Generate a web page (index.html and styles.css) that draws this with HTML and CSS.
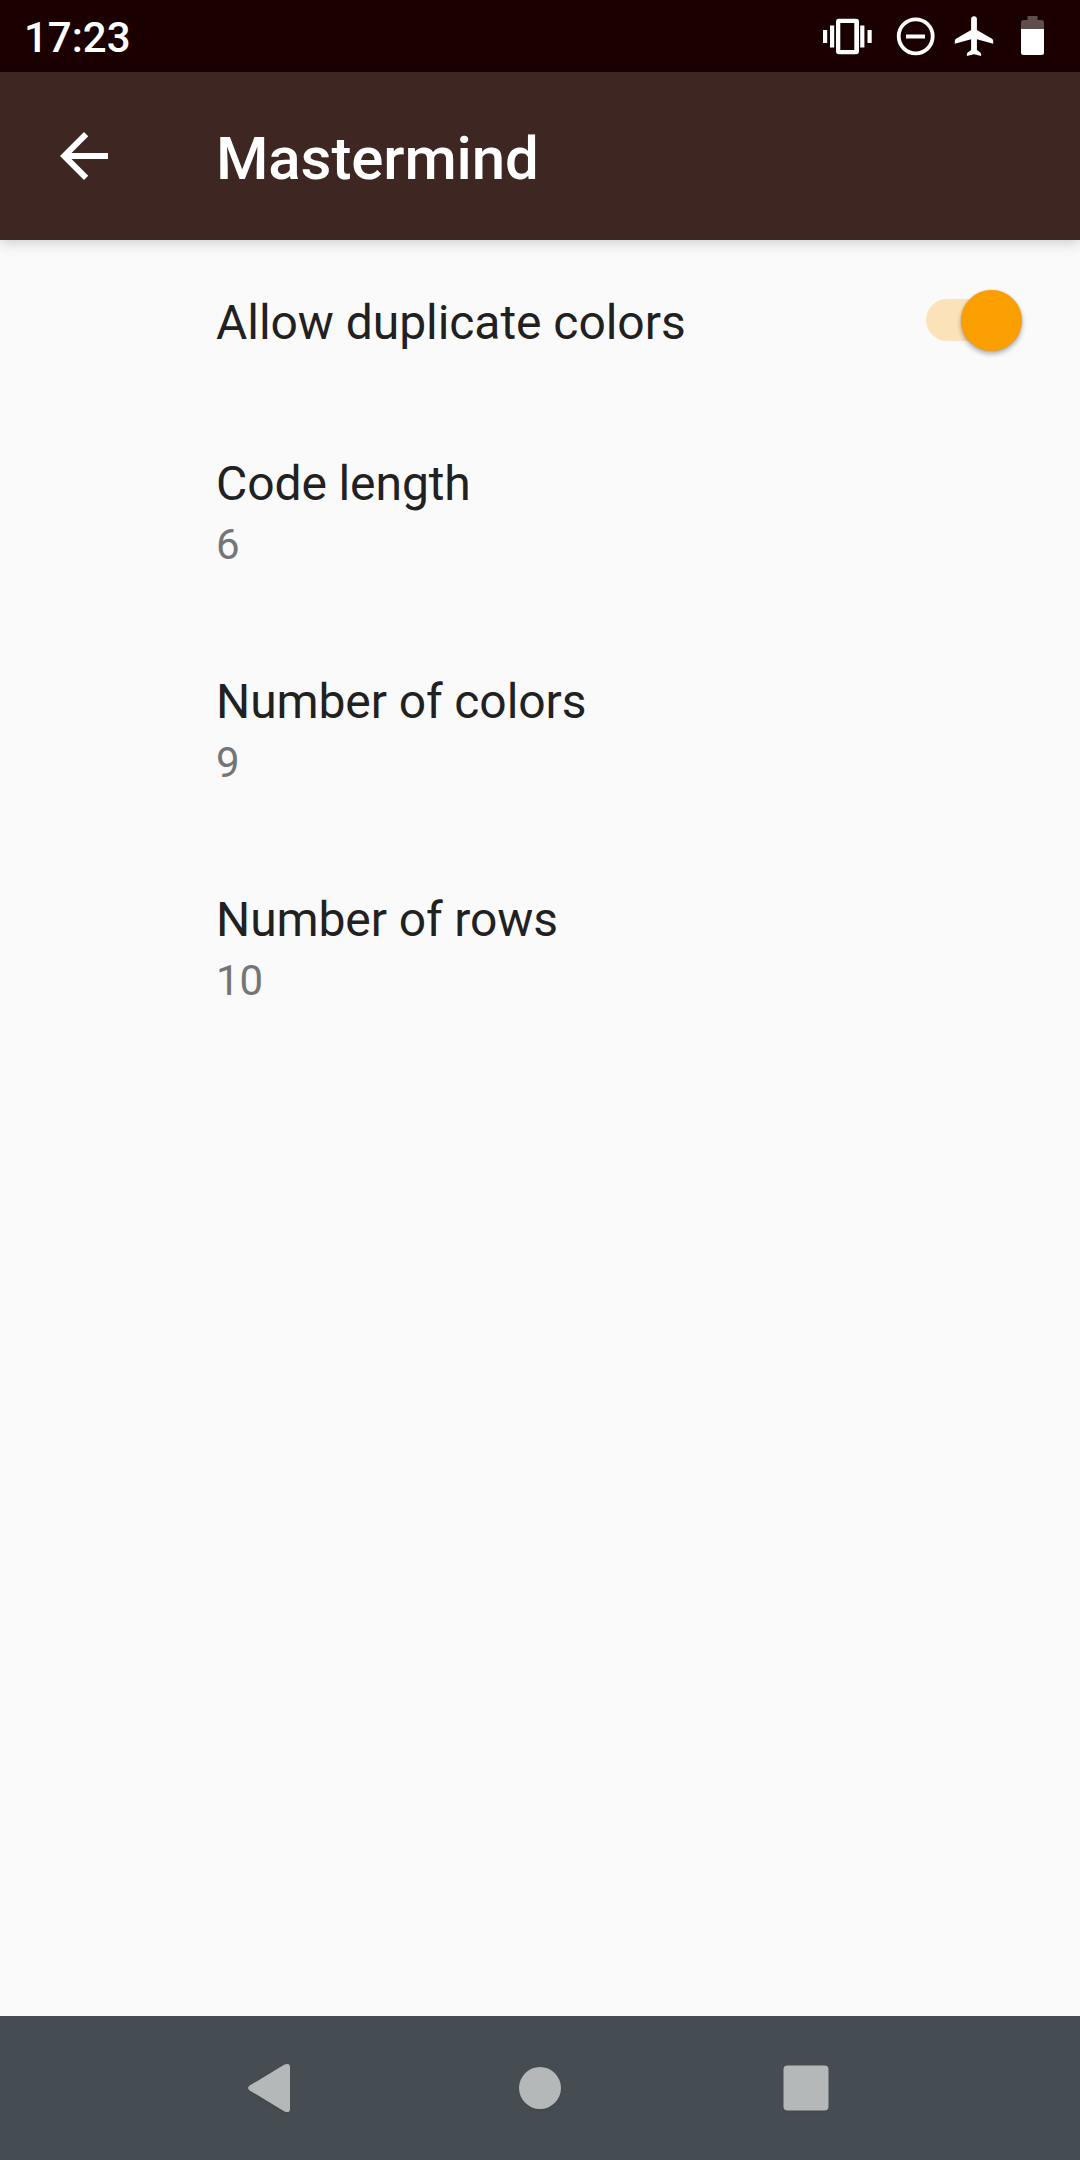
FILE: index.html
```html
<!DOCTYPE html>
<html lang="en">
<head>
<meta charset="utf-8">
<title>Mastermind</title>
<link rel="stylesheet" href="styles.css">
</head>
<body>
<div class="screen">
  <div class="status">
    <span class="clock">17:23</span>
    <svg class="status-icons" viewBox="0 0 240 72" fill="#fff">
      <path transform="translate(-17 12)" fill-rule="evenodd" d="M0 18h4.200v13H0zM7 13.500h4.200v22H7zM37.200 13.500h4.200v22h-4.200zM44.500 18h4.200v13h-4.200zM16 6.700h17a3 3 0 0 1 3 3v29.600a3 3 0 0 1-3 3H16a3 3 0 0 1-3-3V9.700a3 3 0 0 1 3-3zM17.300 11v27h14V11z"/>
      <circle cx="75.700" cy="36.300" r="17" fill="none" stroke="#fff" stroke-width="3.800"/>
      <path d="M66 34.500h19v4H66z"/>
      <path d="M134 16.200a2.900 2.900 0 0 1 2.900 2.900V30L152 38.800q1.200.8 1.200 2.200v2.700l-16.300-4.500V50l3.400 2.600q.8.700.8 1.700V56L134 54.300 126.900 56v-1.700q0-1 .8-1.700l3.400-2.600V39.200L114.800 43.700V41q0-1.400 1.200-2.200L131.100 30V19.100a2.900 2.900 0 0 1 2.900-2.900z"/>
      <path fill-opacity=".3" d="M187.500 16h10v4h4a2.500 2.500 0 0 1 2.500 2.500V29h-23v-6.500a2.500 2.500 0 0 1 2.500-2.500h4z"/>
      <path d="M181 29h23v23.500a2.500 2.500 0 0 1-2.500 2.500h-18a2.500 2.500 0 0 1-2.500-2.500z"/>
    </svg>
  </div>
  <header class="toolbar">
    <svg class="back" viewBox="0 0 24 24" fill="#fff"><path d="M20 11H7.830l5.590-5.590L12 4l-8 8 8 8 1.410-1.410L7.830 13H20v-2z"/></svg>
    <h1 class="title">Mastermind</h1>
  </header>
  <main class="settings">
    <div class="row row-switch">
      <span class="label">Allow duplicate colors</span>
      <span class="switch"><span class="thumb"></span></span>
    </div>
    <div class="row"><span class="label">Code length</span><span class="value">6</span></div>
    <div class="row"><span class="label">Number of colors</span><span class="value">9</span></div>
    <div class="row"><span class="label">Number of rows</span><span class="value">10</span></div>
  </main>
  <nav class="navbar">
    <svg class="nav-icons" viewBox="0 0 1080 144">
      <g class="nav-shape">
        <path d="M249.700 69.600 284.500 48.500Q290 46.500 290 51V93Q290 97.500 284.500 95.500L249.700 74.400Q246.500 72 249.700 69.600z"/>
        <circle cx="540" cy="72" r="21"/>
        <rect x="783.500" y="49.500" width="45" height="45" rx="4"/>
      </g>
    </svg>
  </nav>
</div>
</body>
</html>
```
FILE: styles.css
```css
body { margin: 0; font-family: Roboto, "Liberation Sans", sans-serif; }
.screen { width: 1080px; height: 2160px; display: flex; flex-direction: column; background: #fafafa; overflow: hidden; }
.status { height: 72px; background: #1b0000; color: #fff; display: flex; justify-content: space-between; }
.clock { padding-left: 24px; font-size: 42px; font-weight: 500; line-height: 76px; }
.status-icons { width: 240px; height: 72px; overflow: visible; }
.toolbar { height: 168px; box-sizing: border-box; padding: 0 48px; display: flex; align-items: center; gap: 96px; background: #3e2723; color: #fff; box-shadow: 0 3px 12px rgba(0, 0, 0, .18); }
.back { width: 72px; height: 72px; }
.title { margin: 0; font-size: 60px; font-weight: 500; line-height: 70px; padding-top: 6px; letter-spacing: -.1px; }
.settings { flex: 1; }
.row { height: 218px; box-sizing: border-box; padding: 54px 48px 0 216px; display: flex; flex-direction: column; }
.row-switch { height: 162px; padding: 0 59px 2px 216px; flex-direction: row; align-items: center; justify-content: space-between; }
.label { font-size: 48px; line-height: 56px; letter-spacing: -.1px; color: #212121; }
.row-switch .label { padding-top: 6px; letter-spacing: -.05px; }
.value { font-size: 42px; line-height: 50px; padding-top: 8px; color: #757575; }
.switch { width: 95px; height: 42px; border-radius: 21px; background: #fce2b9; display: flex; align-items: center; justify-content: flex-end; }
.thumb { width: 61px; height: 61px; margin: 1px -1px 0 0; flex: none; border-radius: 50%; background: #fb9f00; box-shadow: 0 3px 5px rgba(0, 0, 0, .3), 0 0 2px rgba(0, 0, 0, .15); }
.navbar { height: 144px; background: #454d53; }
.nav-icons { display: block; width: 1080px; height: 144px; }
.nav-shape { fill: #b5b8b9; filter: drop-shadow(0 2px 1px rgba(65, 72, 72, .8)); }
```
